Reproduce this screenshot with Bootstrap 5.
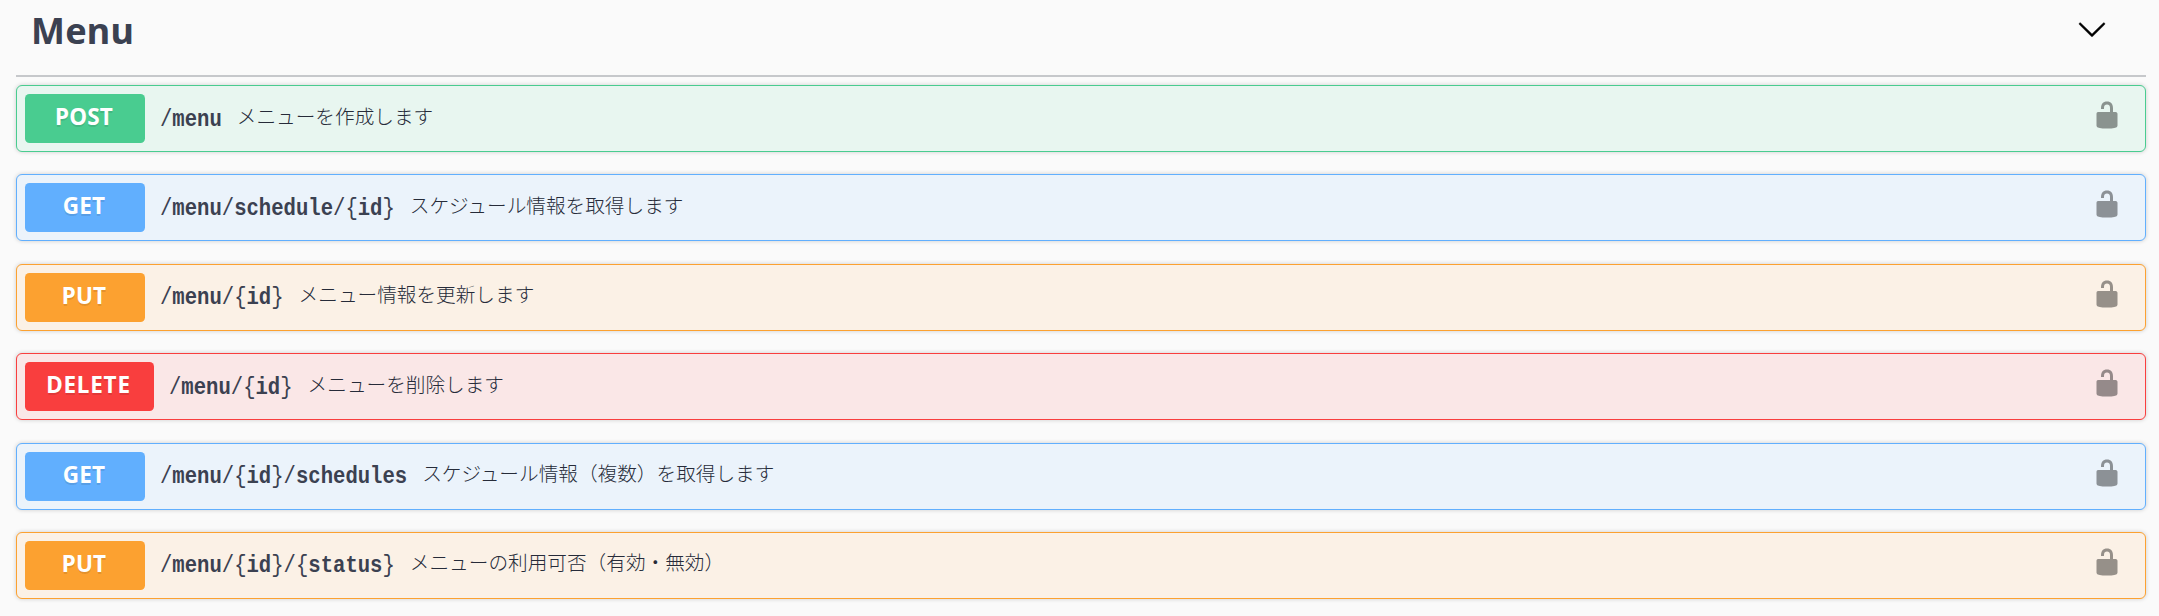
<!DOCTYPE html>
<html lang="ja">
<head>
<meta charset="utf-8">
<title>Menu API</title>
<meta name="viewport" content="width=device-width, initial-scale=1">
<link href="https://cdn.jsdelivr.net/npm/bootstrap@5.3.0/dist/css/bootstrap.min.css" rel="stylesheet">
<style>
body{background:#fafafa;color:#3b4151;font-family:"Noto Sans","Noto Sans CJK JP",sans-serif;overflow:hidden}
.api-section{padding:0 13px 0 16px}
.tag-head{height:77px;padding:0 39px 14px 15px;border-bottom:2px solid #c6c8cb;margin-bottom:8px}
.tag-title{font:bold 36px/54px "Noto Sans",sans-serif;letter-spacing:.2px}
.tag-head svg{width:30px;height:30px;margin-top:-3px;stroke:#000;stroke-width:.3}
.op{--c:#49cc90;--bg:#e8f6f0;height:67px;margin-bottom:22.4px;padding:0 23.5px 0 8px;border:1px solid var(--c);border-radius:6px;background:var(--bg);box-shadow:0 0 4.5px rgba(0,0,0,.19)}
.op-get{--c:#61affe;--bg:#ebf3fb}
.op-put{--c:#fca130;--bg:#fbf1e6}
.op-delete{--c:#f93e3e;--bg:#fae7e7}
.method{min-width:120px;height:49px;padding-right:2px;border-radius:4.5px;background:var(--c);color:#fff;font:bold 22.5px/45px "Noto Sans",sans-serif;letter-spacing:.2px;text-align:center;text-shadow:0 1.5px 0 rgba(0,0,0,.1)}
.op-delete .method{width:129px;letter-spacing:.8px}
.path{font:bold 20.6px/30px "Liberation Mono",monospace;padding:0 15px;position:relative;top:1px;transform:scaleY(1.2);white-space:pre}
.path b{font-weight:400}
.desc{font:300 19.65px/30px "Noto Sans CJK JP",sans-serif;color:#262b39;position:relative;top:-3px;white-space:nowrap}
.lock{width:30px;height:30px;opacity:.4;margin-top:-7px}
</style>
</head>
<body>
<svg class="d-none">
<symbol id="unlocked" viewBox="0 0 20 20"><path d="M15.8 8H14V5.6C14 2.703 12.665 1 10 1 7.334 1 6 2.703 6 5.6V6h2v-.801C8 3.754 8.797 3 10 3c1.203 0 2 .754 2 2.199V8H4c-.553 0-1 .646-1 1.199V17c0 .549.428 1.139.951 1.307l1.197.387C5.672 18.861 6.55 19 7.1 19h5.8c.549 0 1.428-.139 1.951-.307l1.196-.387c.524-.167.953-.757.953-1.306V9.199C17 8.646 16.352 8 15.8 8z"/></symbol>
</svg>
<main class="api-section">
<header class="tag-head d-flex align-items-center justify-content-between">
<h1 class="tag-title m-0">Menu</h1>
<svg viewBox="0 0 20 20"><path d="M17.418 6.109c.272-.268.709-.268.979 0s.271.701 0 .969l-7.908 7.83c-.27.268-.707.268-.979 0l-7.908-7.83c-.27-.268-.27-.701 0-.969.271-.268.709-.268.979 0L10 13.25l7.418-7.141z"/></svg>
</header>
<div class="op d-flex align-items-center"><span class="method">POST</span><span class="path"><b>/</b>menu</span><span class="desc">メニューを作成します</span><svg class="lock ms-auto"><use href="#unlocked"/></svg></div>
<div class="op op-get d-flex align-items-center"><span class="method">GET</span><span class="path"><b>/</b>menu<b>/</b>schedule<b>/{</b>id<b>}</b></span><span class="desc">スケジュール情報を取得します</span><svg class="lock ms-auto"><use href="#unlocked"/></svg></div>
<div class="op op-put d-flex align-items-center"><span class="method">PUT</span><span class="path"><b>/</b>menu<b>/{</b>id<b>}</b></span><span class="desc">メニュー情報を更新します</span><svg class="lock ms-auto"><use href="#unlocked"/></svg></div>
<div class="op op-delete d-flex align-items-center"><span class="method">DELETE</span><span class="path"><b>/</b>menu<b>/{</b>id<b>}</b></span><span class="desc">メニューを削除します</span><svg class="lock ms-auto"><use href="#unlocked"/></svg></div>
<div class="op op-get d-flex align-items-center"><span class="method">GET</span><span class="path"><b>/</b>menu<b>/{</b>id<b>}/</b>schedules</span><span class="desc">スケジュール情報（複数）を取得します</span><svg class="lock ms-auto"><use href="#unlocked"/></svg></div>
<div class="op op-put d-flex align-items-center"><span class="method">PUT</span><span class="path"><b>/</b>menu<b>/{</b>id<b>}/{</b>status<b>}</b></span><span class="desc">メニューの利用可否（有効・無効）</span><svg class="lock ms-auto"><use href="#unlocked"/></svg></div>
</main>
<script src="https://cdn.jsdelivr.net/npm/bootstrap@5.3.0/dist/js/bootstrap.bundle.min.js"></script>
</body>
</html>
